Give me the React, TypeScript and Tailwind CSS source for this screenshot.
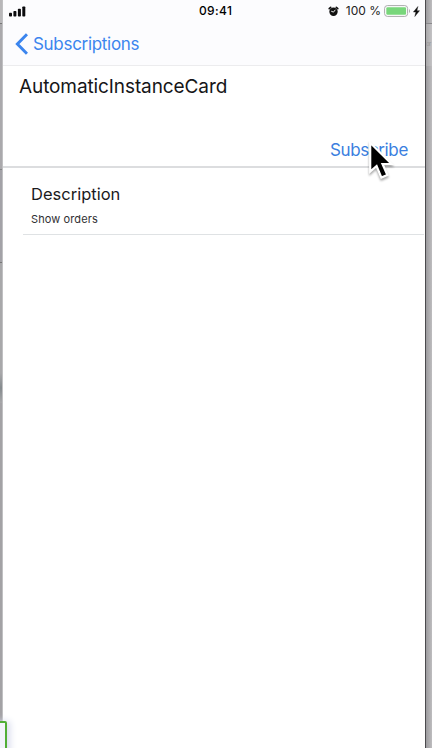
function SignalBars() {
  return (
    <svg className="h-[11px] w-[18px]" viewBox="0 0 18 11" fill="#0b0b0d">
      <rect x="0" y="6.7" width="3" height="3.8" rx="0.8" />
      <rect x="4.4" y="5" width="3" height="5.5" rx="0.8" />
      <rect x="8.9" y="2.8" width="3" height="7.7" rx="0.8" />
      <rect x="13.3" y="0.4" width="3" height="10.1" rx="0.8" />
    </svg>
  );
}

function AlarmIcon() {
  return (
    <svg className="h-[11px] w-[11px]" viewBox="0 0 11 11">
      <circle cx="5.5" cy="5.7" r="4.2" fill="#111" />
      <path d="M1.2 2.7L2.7 1.3M8.3 1.3l1.5 1.4" stroke="#111" strokeWidth="1.6" strokeLinecap="round" />
      <path d="M3.2 5.2L5.5 6.1L7.3 3.8" stroke="#fff" strokeWidth="0.9" fill="none" />
    </svg>
  );
}

function Battery() {
  return (
    <svg className="h-[12px] w-[27px]" viewBox="0 0 27 12">
      <rect x="0.6" y="0.6" width="23" height="10.8" rx="2.8" fill="#fff" stroke="#a9a9ab" strokeWidth="1" />
      <rect x="2.3" y="2.2" width="19.8" height="7.6" rx="1.2" fill="#78d67b" />
      <path d="M25 4v4c1.3-.6 1.3-3.4 0-4z" fill="#a9a9ab" />
    </svg>
  );
}

function Bolt() {
  return (
    <svg className="h-[11px] w-[7px]" viewBox="0 0 7 11" fill="#111" stroke="#111" strokeWidth="0.4">
      <path d="M4.9 0.5L0.4 6h2.5L1.8 10.5L6.5 4.7H3.9z" />
    </svg>
  );
}

function Cursor() {
  return (
    <svg className="absolute left-[364px] top-[136px] h-[49px] w-[31px] drop-shadow-[0_2px_1px_rgba(0,0,0,0.35)]" viewBox="0 0 31 49">
      <path
        d="M6.2 6.8V35.6L12.6 30L17.4 41.6L23.4 39L18.5 28H27.6Z"
        fill="#000"
        stroke="#fff"
        strokeWidth="2.2"
      />
    </svg>
  );
}

export default function App() {
  return (
    <div className="relative flex h-[748px] w-[432px] overflow-hidden bg-[#a6a5a8] font-['Inter','Liberation_Sans',sans-serif]">
      <div className="flex w-[3px] shrink-0 flex-col border-r border-[#c0c0c2] bg-[#a3a2a5]">
        <div className="h-[24px] border-b border-[#777] bg-[#b8b7b9]" />
        <div className="h-[146px] border-b border-[#858587] bg-[#aaa9ac]" />
        <div className="h-[93px] border-b border-[#777] bg-[#a3a2a7]" />
        <div className="h-[110px] bg-[#a8a8aa]" />
        <div className="h-[30px] bg-linear-to-b from-[#a8a8aa] via-[#858b8e] to-[#a8a8aa]" />
      </div>
      <div className="flex w-[422px] shrink-0 flex-col rounded-t-[4px] bg-white">
        <header className="flex h-[66px] shrink-0 flex-col border-b border-[#ececee] bg-[#fcfcfe]">
          <div className="flex h-[22px] items-center pl-[6px] pr-[5px] text-black">
            <div className="flex w-[190px] items-center">
              <SignalBars />
            </div>
            <span className="w-[60px] whitespace-nowrap text-[12px] font-medium tracking-[0.35px]">09:41</span>
            <div className="flex flex-1 items-center justify-end">
              <AlarmIcon />
              <span className="ml-[7px] mr-[3px] whitespace-nowrap text-[12px] tracking-[0px] text-[#222]">100 %</span>
              <Battery />
              <span className="ml-[2px]">
                <Bolt />
              </span>
            </div>
          </div>
          <div className="flex h-[43px] items-center pl-[12px] text-[#3b85ee]">
            <svg className="h-[22px] w-[13px]" viewBox="0 0 13 22" fill="none" stroke="currentColor" strokeWidth="3">
              <path d="M12 1.2L2.4 11L12 20.8" />
            </svg>
            <span className="ml-[5px] text-[17px] leading-[20px] tracking-[-0.3px]">Subscriptions</span>
          </div>
        </header>
        <section className="flex h-[102px] shrink-0 flex-col justify-between border-b-2 border-[#dcdddf] pl-[16px] pr-[17px]">
          <h1 className="mt-[9px] text-[19px] leading-[24px] tracking-[-0.1px] text-[#161618]">AutomaticInstanceCard</h1>
          <button className="mb-[5px] self-end text-[17px] leading-[22px] tracking-[-0.35px] text-[#3b7fe0]">Subscribe</button>
        </section>
        <section className="ml-[20px] mr-[1px] flex h-[67px] flex-col border-b border-[#dfe2e4] pl-[8px]">
          <h2 className="mt-[16px] text-[16.5px] leading-[20px] text-[#1b1b1d]">Description</h2>
          <p className="mt-[7px] text-[11px] leading-[16px] tracking-[0.1px] text-[#303033]">Show orders</p>
        </section>
      </div>
      <div className="w-[1px] shrink-0 bg-[#4b4a4d]" />
      <div className="flex w-[6px] shrink-0 flex-col bg-linear-to-r from-[#9c9b9e] to-[#bebdbf]">
        <div className="h-[24px] shrink-0 border-b border-[#8a898c]" />
        <div className="h-[42px] shrink-0 bg-linear-to-r from-[#a9a8aa] to-[#c4c3c5] pt-[13px] text-[6px] leading-[14px] tracking-[-0.6px] text-[#989799]">or</div>
      </div>
      <Cursor />
      <div className="absolute left-[-12px] top-[721px] h-[40px] w-[19px] rounded-tr-[2px] border-2 border-[#50ae36] bg-[#f1f3fa] shadow-[3px_0_7px_#d8dced]" />
    </div>
  );
}
